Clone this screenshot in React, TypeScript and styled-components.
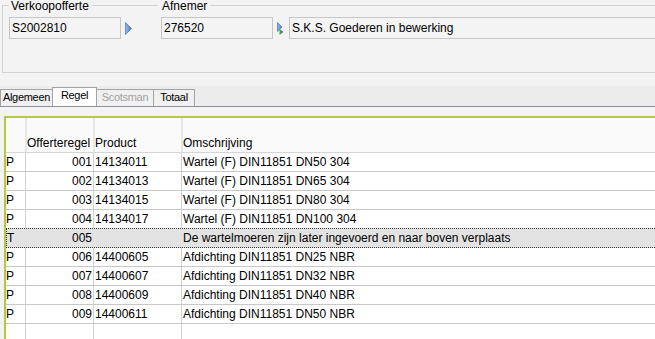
import React from 'react';
import styled, { createGlobalStyle } from 'styled-components';

const GlobalStyle = createGlobalStyle`
  html, body {
    margin: 0;
    padding: 0;
  }
  body {
    font-family: "Liberation Sans", Arial, sans-serif;
    font-size: 12px;
    color: #000;
    background: #f3f3f3;
    overflow: hidden;
  }
`;

const Window = styled.div`
  display: flex;
  flex-direction: column;
  width: 655px;
  height: 339px;
  overflow: hidden;
  background: #f3f3f3;
`;

/* ---------- header group ---------- */

const HeaderPanel = styled.div`
  flex: none;
  height: 86px;
  padding: 1px 0 0 2px;
  box-sizing: border-box;
  overflow: hidden;
`;

const Group = styled.div`
  width: 900px;
`;

const LegendRow = styled.div`
  display: grid;
  grid-template-columns: 156px 1fr;
  height: 11px;
`;

const LegendCell = styled.div`
  display: flex;
  align-items: flex-start;
`;

const Corner = styled.div`
  flex: none;
  width: 7px;
  height: 7px;
  margin-top: 4px;
  box-sizing: border-box;
  border-left: 1px solid #d2d2d2;
  border-top: 1px solid #d2d2d2;
`;

const Rule = styled.div`
  flex: 1;
  height: 1px;
  margin-top: 4px;
  background: #d2d2d2;
`;

const Legend = styled.span<{ $pad: string }>`
  flex: none;
  padding: ${(p) => p.$pad};
  line-height: 11px;
`;

const GroupBody = styled.div`
  display: flex;
  align-items: flex-start;
  height: 61px;
  box-sizing: border-box;
  padding: 5px 0 0 6px;
  border-left: 1px solid #d2d2d2;
  border-bottom: 1px solid #d2d2d2;
`;

const Field = styled.div<{ $width: number; $gap?: number }>`
  flex: none;
  width: ${(p) => p.$width}px;
  height: 22px;
  margin-left: ${(p) => p.$gap ?? 0}px;
  box-sizing: border-box;
  border: 1px solid #c6c6c6;
  padding: 0 2px;
  line-height: 20px;
  background: #f4f4f4;
  white-space: nowrap;
`;

const IconBox = styled.span<{ $gap: number }>`
  flex: none;
  display: flex;
  margin: 5px 0 0 ${(p) => p.$gap}px;
`;

function GoArrow() {
  return (
    <IconBox $gap={4}>
      <svg width="7" height="13" viewBox="0 0 7 13">
        <defs>
          <linearGradient id="goFill" x1="0" y1="0" x2="1" y2="0">
            <stop offset="0" stopColor="#9dbff0" />
            <stop offset="1" stopColor="#3d70c6" />
          </linearGradient>
        </defs>
        <path d="M0.5 0.5 L6.5 6.5 L0.5 12.5 Z" fill="url(#goFill)" stroke="#4572bd" strokeWidth="0.7" />
      </svg>
    </IconBox>
  );
}

function LinkArrow() {
  return (
    <IconBox $gap={4}>
      <svg width="7" height="13" viewBox="0 0 7 13">
        <defs>
          <linearGradient id="linkFill" x1="0" y1="0" x2="1" y2="0">
            <stop offset="0" stopColor="#9dbff0" />
            <stop offset="1" stopColor="#3d70c6" />
          </linearGradient>
        </defs>
        <path d="M0.5 0.5 L5 5 L0.5 9.5 Z" fill="url(#linkFill)" stroke="#4572bd" strokeWidth="0.7" />
        <path d="M2.5 7 L6.5 10 L2.5 13 Z" fill="#3f9a4a" />
      </svg>
    </IconBox>
  );
}

/* ---------- tabs ---------- */

const TabStrip = styled.div`
  flex: none;
  display: flex;
  align-items: flex-end;
  height: 21px;
  box-sizing: border-box;
  background: #ececec;
  border-bottom: 1px solid #8f8f9b;
`;

const Tab = styled.div<{ $width: number; $active?: boolean; $disabled?: boolean }>`
  flex: none;
  width: ${(p) => p.$width}px;
  height: ${(p) => (p.$active ? 19 : 17)}px;
  box-sizing: border-box;
  margin-left: -1px;
  border: 1px solid #a4a4a4;
  border-bottom: none;
  background: ${(p) => (p.$active ? '#ffffff' : '#f0f0f0')};
  color: ${(p) => (p.$disabled ? '#a2a2a2' : '#000')};
  font-size: 11px;
  letter-spacing: -0.3px;
  text-align: center;
  line-height: 15px;
  white-space: nowrap;
  &:first-child {
    margin-left: 0;
  }
`;

/* ---------- grid ---------- */

const GridFrame = styled.div`
  flex: 1;
  display: flex;
  min-height: 0;
  margin: 9px 0 0 4px;
  padding: 2px 0 0 2px;
  background: #b5c93b;
`;

const Grid = styled.div`
  flex: 1;
  display: flex;
  flex-direction: column;
  min-width: 0;
  background: #fff;
  overflow: hidden;
`;

const HeadRow = styled.div`
  flex: none;
  display: flex;
  height: 35px;
  box-sizing: border-box;
  background: #fafafa;
  border-bottom: 1px solid #d6d6d6;
`;

const HeadCell = styled.div<{ $width?: number }>`
  flex: ${(p) => (p.$width ? 'none' : '1')};
  width: ${(p) => (p.$width ? `${p.$width}px` : 'auto')};
  box-sizing: border-box;
  display: flex;
  align-items: flex-end;
  padding-bottom: 2px;
  line-height: 14px;
  border-right: ${(p) => (p.$width ? '2px solid #e7e7e7' : 'none')};
  white-space: nowrap;
`;

const Row = styled.div<{ $focused?: boolean }>`
  flex: none;
  display: flex;
  height: ${(p) => (p.$focused ? 20 : 19)}px;
  box-sizing: border-box;
  background: ${(p) => (p.$focused ? '#e3e3e3' : '#fff')};
  border-bottom: 1px ${(p) => (p.$focused ? 'dotted #333' : 'solid #c8c8c8')};
  border-top: ${(p) => (p.$focused ? '1px dotted #333' : 'none')};
  border-left: ${(p) => (p.$focused ? '1px dotted #333' : 'none')};
  margin-top: ${(p) => (p.$focused ? -1 : 0)}px;
  line-height: 18px;
`;

const Filler = styled.div`
  flex: 1;
  display: flex;
`;

const Cell = styled.div<{ $width?: number; $right?: boolean; $pad?: string; $plain?: boolean }>`
  flex: ${(p) => (p.$width ? 'none' : '1')};
  width: ${(p) => (p.$width ? `${p.$width}px` : 'auto')};
  box-sizing: border-box;
  padding: ${(p) => p.$pad ?? '0'};
  text-align: ${(p) => (p.$right ? 'right' : 'left')};
  border-right: ${(p) => (p.$width ? `1px solid ${p.$plain ? 'transparent' : '#d2d2d2'}` : 'none')};
  white-space: nowrap;
  overflow: hidden;
`;

type Line = { kind: string; nr: string; product: string; text: string };

const lines: Line[] = [
  { kind: 'P', nr: '001', product: '14134011', text: 'Wartel (F) DIN11851 DN50 304' },
  { kind: 'P', nr: '002', product: '14134013', text: 'Wartel (F) DIN11851 DN65 304' },
  { kind: 'P', nr: '003', product: '14134015', text: 'Wartel (F) DIN11851 DN80 304' },
  { kind: 'P', nr: '004', product: '14134017', text: 'Wartel (F) DIN11851 DN100 304' },
  { kind: 'T', nr: '005', product: '', text: 'De wartelmoeren zijn later ingevoerd en naar boven verplaats' },
  { kind: 'P', nr: '006', product: '14400605', text: 'Afdichting DIN11851 DN25 NBR' },
  { kind: 'P', nr: '007', product: '14400607', text: 'Afdichting DIN11851 DN32 NBR' },
  { kind: 'P', nr: '008', product: '14400609', text: 'Afdichting DIN11851 DN40 NBR' },
  { kind: 'P', nr: '009', product: '14400611', text: 'Afdichting DIN11851 DN50 NBR' },
];

export default function App() {
  return (
    <Window>
      <GlobalStyle />
      <HeaderPanel>
        <Group>
          <LegendRow>
            <LegendCell>
              <Corner />
              <Legend $pad="0 3px 0 2px">Verkoopofferte</Legend>
              <Rule />
            </LegendCell>
            <LegendCell>
              <Legend $pad="0 3px 0 4px">Afnemer</Legend>
              <Rule />
            </LegendCell>
          </LegendRow>
          <GroupBody>
            <Field $width={112}>S2002810</Field>
            <GoArrow />
            <Field $width={112} $gap={29}>276520</Field>
            <LinkArrow />
            <Field $width={500} $gap={5}>S.K.S. Goederen in bewerking</Field>
          </GroupBody>
        </Group>
      </HeaderPanel>

      <TabStrip>
        <Tab $width={53}>Algemeen</Tab>
        <Tab $width={45} $active>Regel</Tab>
        <Tab $width={58} $disabled>Scotsman</Tab>
        <Tab $width={42}>Totaal</Tab>
      </TabStrip>

      <GridFrame>
        <Grid>
          <HeadRow>
            <HeadCell $width={21} />
            <HeadCell $width={68}>Offerteregel</HeadCell>
            <HeadCell $width={88}>Product</HeadCell>
            <HeadCell>Omschrijving</HeadCell>
          </HeadRow>
          {lines.map((l) => {
            const focused = l.kind === 'T';
            return (
              <Row key={l.nr} $focused={focused}>
                <Cell $width={focused ? 19 : 20} $plain={focused}>{l.kind}</Cell>
                <Cell $width={68} $right $pad="0 1px 0 0" $plain={focused}>{l.nr}</Cell>
                <Cell $width={88} $pad="0 0 0 1px" $plain={focused}>{l.product}</Cell>
                <Cell $pad="0 0 0 1px" $plain={focused}>{l.text}</Cell>
              </Row>
            );
          })}
          <Filler>
            <Cell $width={20} />
            <Cell $width={68} />
            <Cell $width={88} />
            <Cell />
          </Filler>
        </Grid>
      </GridFrame>
    </Window>
  );
}
